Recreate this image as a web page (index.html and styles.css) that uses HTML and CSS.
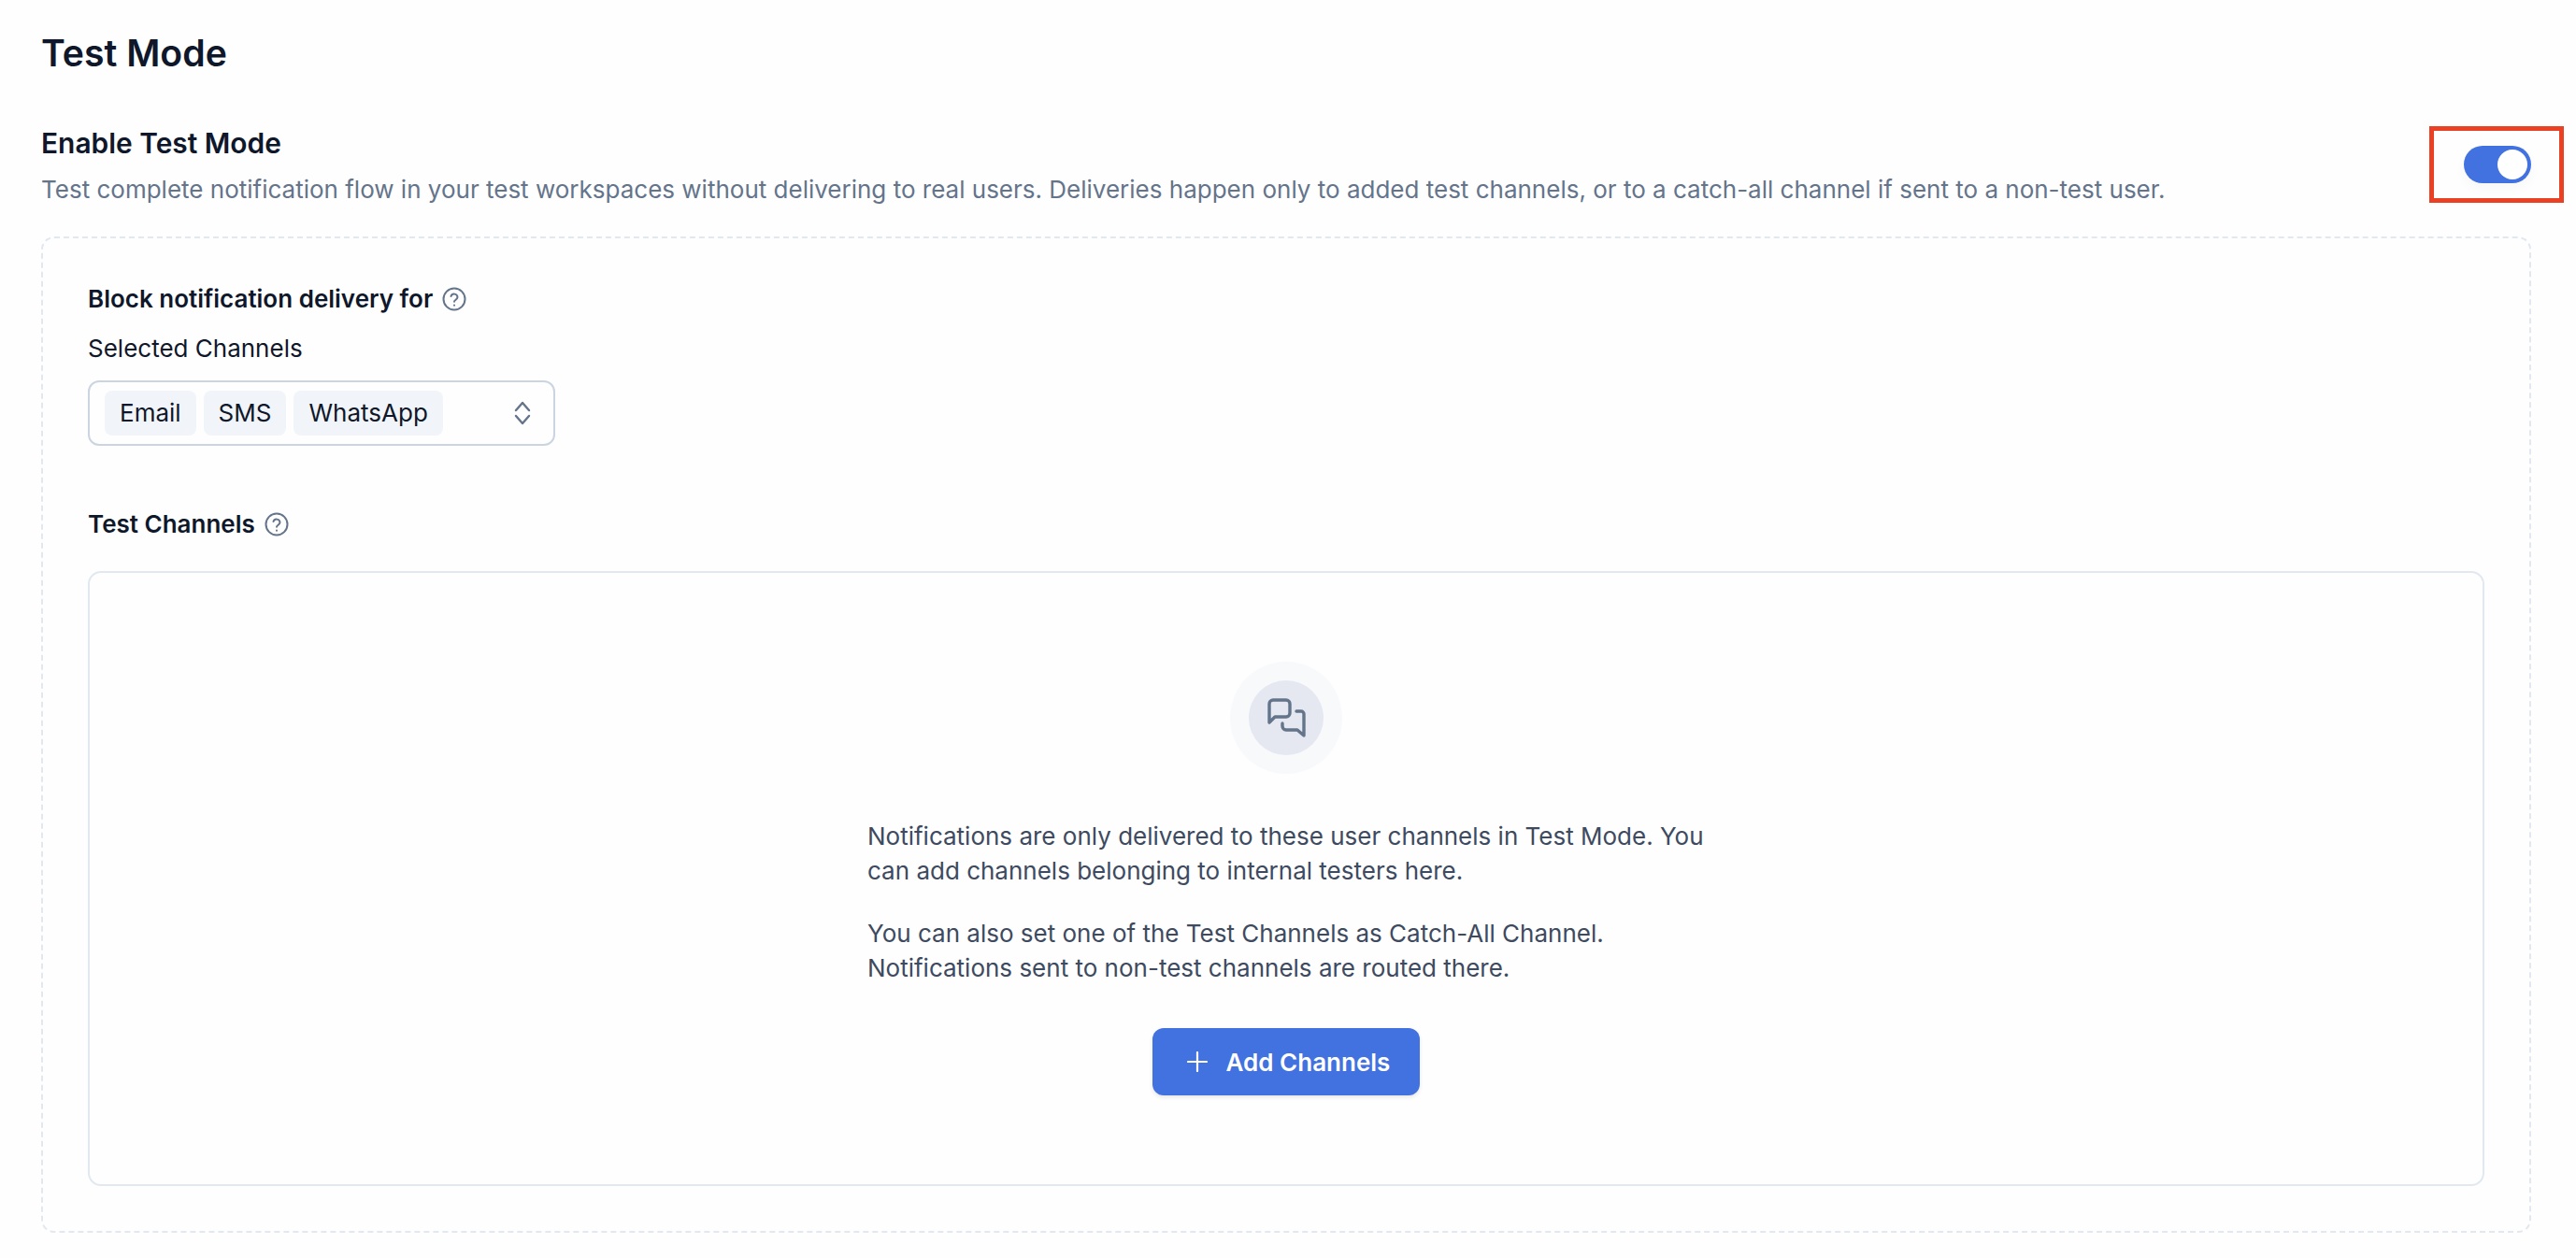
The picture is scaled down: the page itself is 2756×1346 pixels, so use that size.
FILE: index.html
```html
<!DOCTYPE html>
<html lang="en">
<head>
    <meta charset="UTF-8">
    <meta name="viewport" content="width=device-width, initial-scale=1.0">
    <title>Test Mode</title>
    <link rel="stylesheet" href="styles.css">
</head>
<body>
    <div class="page">
        <h1>Test Mode</h1>

        <div class="enable-row">
            <div>
                <h2>Enable Test Mode</h2>
                <p class="enable-desc">Test complete notification flow in your test workspaces without delivering to real users. Deliveries happen only to added test channels, or to a catch-all channel if sent to a non-test user.</p>
            </div>
            <div class="toggle"><span class="toggle-knob"></span></div>
            <div class="highlight"></div>
        </div>

        <div class="settings-box">
            <div class="field-title">
                Block notification delivery for
                <svg class="help-icon" viewBox="0 0 26 26" fill="none" stroke="currentColor" stroke-width="2" stroke-linecap="round" stroke-linejoin="round">
                    <circle cx="13" cy="13" r="11.5"/>
                    <path d="M9.5 10a3.6 3.6 0 0 1 7 1.1c0 2.4-3.5 2.8-3.5 4.7"/>
                    <path d="M13 19.6v.1"/>
                </svg>
            </div>
            <label class="select-label">Selected Channels</label>
            <div class="select-box">
                <span class="chip">Email</span>
                <span class="chip">SMS</span>
                <span class="chip">WhatsApp</span>
                <svg class="select-arrows" viewBox="0 0 20 28" fill="none" stroke="currentColor" stroke-width="2.4" stroke-linecap="round" stroke-linejoin="round">
                    <path d="M3 11 10 3l7 8"/>
                    <path d="M3 17 10 25l7-8"/>
                </svg>
            </div>

            <div class="field-title test-title">
                Test Channels
                <svg class="help-icon" viewBox="0 0 26 26" fill="none" stroke="currentColor" stroke-width="2" stroke-linecap="round" stroke-linejoin="round">
                    <circle cx="13" cy="13" r="11.5"/>
                    <path d="M9.5 10a3.6 3.6 0 0 1 7 1.1c0 2.4-3.5 2.8-3.5 4.7"/>
                    <path d="M13 19.6v.1"/>
                </svg>
            </div>
            <div class="empty-box">
                <div class="icon-ring">
                    <div class="icon-circle">
                        <svg class="chat-icon" viewBox="0 0 48 48" fill="none" stroke="currentColor" stroke-width="3.4" stroke-linecap="round" stroke-linejoin="round">
                            <path d="M6 29V9a4 4 0 0 1 4-4h14a4 4 0 0 1 4 4v10a4 4 0 0 1-4 4H12Z"/>
                            <path d="M35 17h5a3 3 0 0 1 3 3v23l-7-6H24a4 4 0 0 1-4-4v-3"/>
                        </svg>
                    </div>
                </div>
                <div class="empty-text">
                    <p>Notifications are only delivered to these user channels in Test Mode. You can add channels belonging to internal testers here.</p>
                    <p>You can also set one of the Test Channels as Catch-All Channel. Notifications sent to non-test channels are routed there.</p>
                </div>
                <button class="add-btn">
                    <svg class="plus-icon" viewBox="0 0 22 22" fill="none" stroke="currentColor" stroke-width="2.2" stroke-linecap="round">
                        <path d="M11 1v20M1 11h20"/>
                    </svg>
                    Add Channels
                </button>
            </div>
        </div>
    </div>
</body>
</html>
```

FILE: styles.css
```css
* {
    box-sizing: border-box;
    margin: 0;
    padding: 0;
}

body {
    font-family: 'Inter', 'Liberation Sans', sans-serif;
    background: #fefefe;
    color: #0f172a;
}

.page {
    padding: 34px 48px 27px 44px;
}

h1 {
    font-size: 39.2px;
    line-height: 46px;
    font-weight: 600;
    color: #0f172a;
    margin-bottom: 55px;
}

.enable-row {
    position: relative;
    display: flex;
    justify-content: space-between;
    align-items: center;
    margin-bottom: 32px;
}

h2 {
    font-size: 29.9px;
    line-height: 36px;
    font-weight: 600;
    margin-bottom: 14px;
}

.enable-desc {
    font-size: 26px;
    line-height: 36px;
    color: #64748b;
}

.toggle {
    width: 72px;
    height: 40px;
    margin-bottom: 4px;
    border-radius: 20px;
    background: #4271e0;
    display: flex;
    align-items: center;
    justify-content: flex-end;
    padding-right: 4px;
    box-shadow: 0 6px 14px rgba(15, 23, 42, 0.03);
}

.toggle-knob {
    width: 32px;
    height: 32px;
    border-radius: 50%;
    background: #fff;
}

.highlight {
    position: absolute;
    right: -35px;
    top: 0;
    width: 144px;
    height: 82px;
    border: 5px solid #ea4125;
}

.settings-box {
    border: 2px dashed #e2e8f0;
    border-radius: 14px;
    padding: 47px 48px 48px;
}

.field-title {
    display: flex;
    align-items: center;
    gap: 10px;
    font-size: 26px;
    line-height: 36px;
    font-weight: 600;
}

.help-icon {
    width: 26px;
    height: 26px;
    color: #64748b;
}

.select-label {
    display: block;
    font-size: 26px;
    line-height: 36px;
    margin-top: 17px;
    margin-bottom: 16px;
}

.select-box {
    width: 500px;
    height: 70px;
    border: 2px solid #cbd5e1;
    border-radius: 12px;
    display: flex;
    align-items: center;
    gap: 8px;
    padding: 0 16px;
}

.chip {
    height: 48px;
    line-height: 48px;
    padding: 0 16px;
    border-radius: 8px;
    background: #f1f5f9;
    font-size: 26px;
}

.select-arrows {
    width: 20px;
    height: 28px;
    margin-left: auto;
    margin-right: 7px;
    color: #64748b;
}

.test-title {
    margin-top: 66px;
    margin-bottom: 32px;
}

.empty-box {
    border: 2px solid #e2e8f0;
    border-radius: 14px;
    height: 658px;
    padding-top: 95px;
    display: flex;
    flex-direction: column;
    align-items: center;
}

.icon-ring {
    width: 120px;
    height: 120px;
    border-radius: 50%;
    background: #f8f9fb;
    display: flex;
    align-items: center;
    justify-content: center;
}

.icon-circle {
    width: 80px;
    height: 80px;
    border-radius: 50%;
    background: #e5e8f0;
    display: flex;
    align-items: center;
    justify-content: center;
}

.chat-icon {
    width: 48px;
    height: 48px;
    color: #64748b;
}

.empty-text {
    width: 896px;
    margin-top: 49px;
    font-size: 26px;
    line-height: 36.5px;
    color: #3d4a60;
}

.empty-text p + p {
    margin-top: 31px;
}

.add-btn {
    margin-top: 46px;
    width: 286px;
    height: 72px;
    padding-left: 5px;
    border: none;
    border-radius: 12px;
    background: #4271e0;
    color: #fff;
    font-family: inherit;
    font-size: 26px;
    font-weight: 600;
    display: flex;
    align-items: center;
    justify-content: center;
    gap: 20px;
    box-shadow: 0 2px 4px rgba(15, 23, 42, 0.1);
}

.plus-icon {
    width: 22px;
    height: 22px;
}
```
